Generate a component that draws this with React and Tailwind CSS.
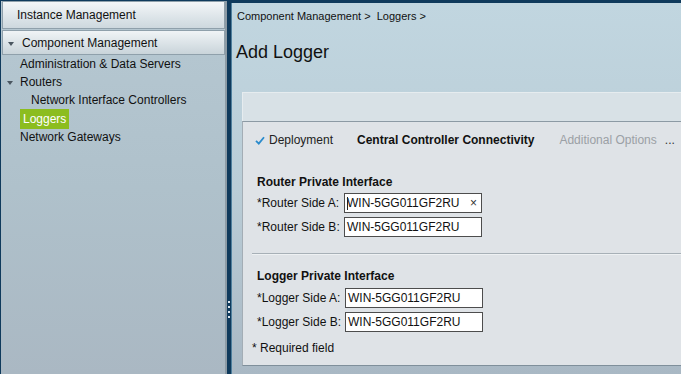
import React from "react";

function Tri() {
  return (
    <svg width="6" height="4" viewBox="0 0 6 4" className="shrink-0 mt-[2px]">
      <path d="M0 0 L6 0 L3 4 Z" fill="#4a5660" />
    </svg>
  );
}

function Field({ label, lw, value, clear, cursor }) {
  return (
    <div className="flex items-center h-[20px]">
      <div className={`${lw} text-[12px] leading-[14px] text-[#111]`}>{label}</div>
      <div className="relative w-[138px] h-[20px] bg-white border border-[#4d4d4d] flex items-center pl-[2px] text-[12px] leading-[14px] text-[#111]">
        {cursor && <span className="absolute left-[2px] top-[3px] w-px h-[13px] bg-[#222]" />}
        <span>{value}</span>
        {clear && <span className="ml-auto mr-[4px] text-[12px] text-[#333]">×</span>}
      </div>
    </div>
  );
}

export default function App() {
  return (
    <div className="w-[681px] h-[374px] overflow-hidden bg-[#0f3a5c] flex font-['Liberation_Sans',Arial,sans-serif]">
      <aside className="w-[226px] ml-px mt-px bg-gradient-to-b from-[#b6c8d2] via-[#afc1cb] to-[#aab8c3] border-r-2 border-[#8d9ba5] flex flex-col">
        <div className="h-[28px] ml-px border border-[#8fa0ab] bg-gradient-to-b from-[#f3f6f8] to-[#cdd8de] flex items-center pl-[14px] text-[12px] text-[#111]">
          Instance Management
        </div>
        <div className="mt-[1px] h-[25px] ml-px border border-[#8fa0ab] bg-gradient-to-b from-[#f0f4f6] to-[#c9d4da] flex items-center pl-[5px] gap-[8px] text-[12px] text-[#111]">
          <Tri />
          <span>Component Management</span>
        </div>
        <div className="flex flex-col text-[12px] text-[#111]">
          <div className="h-[18px] flex items-center pl-[19px]">Administration &amp; Data Servers</div>
          <div className="h-[18px] flex items-center pl-[6px] gap-[7px]">
            <Tri />
            <span>Routers</span>
          </div>
          <div className="h-[18px] flex items-center pl-[30px]">Network Interface Controllers</div>
          <div className="h-[19px] flex items-center pl-[19px]">
            <span className="h-[20px] leading-[20px] px-[3px] bg-[#8cbd1f] text-white">Loggers</span>
          </div>
          <div className="h-[18px] flex items-center pl-[19px]">Network Gateways</div>
        </div>
      </aside>
      <div className="w-[4px] flex flex-col items-center pt-[301px] gap-[3px]">
        <span className="w-[2px] h-[2px] bg-[#dce6ee]" />
        <span className="w-[2px] h-[2px] bg-[#dce6ee]" />
        <span className="w-[2px] h-[2px] bg-[#dce6ee]" />
        <span className="w-[2px] h-[2px] bg-[#dce6ee]" />
      </div>
      <main className="flex-1 mt-[3px] flex flex-col bg-gradient-to-b from-[#c1d6e0] via-[#bacdd7] to-[#a9b8c4] border-l border-[#4f7f9d]">
        <div className="pt-[7px] pl-[5px] text-[11px] leading-[13px] text-[#111]">
          Component Management &gt;&nbsp; Loggers &gt;
        </div>
        <div className="mt-[18px] pl-[4px] text-[18px] leading-[22px] text-[#111]">Add Logger</div>
        <div className="mt-[29px] ml-[10px] flex flex-col">
          <div className="h-[29px] bg-[#d8e1e6] border-t border-l border-[#e6ecef]" />
          <div className="h-[245px] bg-[#dfe3e7] border-t border-l border-b border-t-[#8c9aa4] border-l-[#a3adb5] border-b-[#7f8f9b] flex flex-col pl-[9px]">
            <div className="pt-[11px] flex items-center text-[12px] leading-[14px]">
              <svg width="10" height="9" viewBox="0 0 10 9" className="ml-[3px]">
                <path d="M1 4.8 L3.8 7.6 L9 1.2" stroke="#2a8bcc" strokeWidth="1.8" fill="none" />
              </svg>
              <span className="ml-[4px] text-[#222]">Deployment</span>
              <span className="ml-[24px] font-bold text-[#111]">Central Controller Connectivity</span>
              <span className="ml-[25px] text-[#9ba0a5]">Additional Options</span>
              <span className="ml-[8px] text-[#333]">...</span>
            </div>
            <div className="mt-[28px] pl-[5px] text-[12px] leading-[14px] font-bold text-[#111]">Router Private Interface</div>
            <div className="mt-[4px] pl-[5px] flex flex-col gap-[4px]">
              <Field label="*Router Side A:" lw="w-[87px]" value="WIN-5GG011GF2RU" clear cursor />
              <Field label="*Router Side B:" lw="w-[87px]" value="WIN-5GG011GF2RU" />
            </div>
            <div className="mt-[16px] h-px bg-[#a7b0b7] border-b border-[#eef1f3] box-content" />
            <div className="mt-[14px] pl-[5px] text-[12px] leading-[14px] font-bold text-[#111]">Logger Private Interface</div>
            <div className="mt-[5px] pl-[5px] flex flex-col gap-[4px]">
              <Field label="*Logger Side A:" lw="w-[88px]" value="WIN-5GG011GF2RU" />
              <Field label="*Logger Side B:" lw="w-[88px]" value="WIN-5GG011GF2RU" />
            </div>
            <div className="mt-[9px] text-[12px] leading-[14px] text-[#111]">* Required field</div>
          </div>
        </div>
      </main>
    </div>
  );
}
